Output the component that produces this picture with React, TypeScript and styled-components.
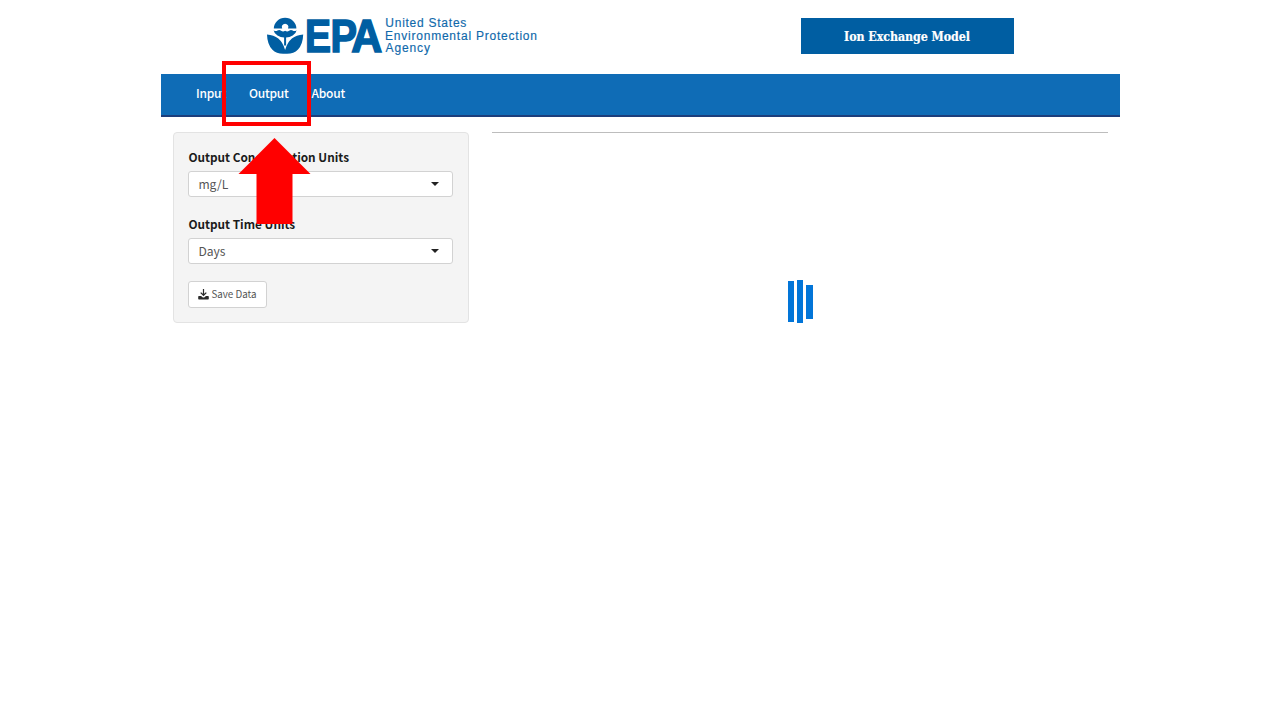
import React from "react";
import styled, { createGlobalStyle } from "styled-components";

const GlobalStyle = createGlobalStyle`
  * { box-sizing: border-box; }
  body {
    margin: 0;
    background: #fff;
    color: #1b1b1b;
    font-family: "Noto Sans CJK SC", "Open Sans", sans-serif;
    overflow: hidden;
  }
`;

const Page = styled.div`
  position: relative;
  width: 1280px;
  height: 720px;
`;

const Container = styled.div`
  width: 959px;
  margin-left: 161px;
`;

const Header = styled.header`
  display: flex;
  justify-content: space-between;
  height: 74px;
  padding: 17px 106px 0;
`;

const Logo = styled.svg`
  display: block;
  width: 280px;
  height: 42px;
`;

const AppTitle = styled.h1`
  display: flex;
  align-items: center;
  justify-content: center;
  width: 213px;
  height: 36px;
  margin: 1px 0 0;
  padding-right: 1px;
  background: #005ea2;
  color: #fff;
  font: bold 12.3px "DejaVu Serif Condensed", "DejaVu Serif", serif;
  font-stretch: condensed;
  letter-spacing: -0.04px;
  -webkit-text-stroke: 0.2px #fff;
`;

const NavBar = styled.nav`
  display: flex;
  gap: 23px;
  height: 43px;
  padding: 0 35px;
  background: #0f6cb6;
  border-bottom: 2px solid #1c3e7c;
`;

const NavLink = styled.a<{ $width: number }>`
  width: ${(p) => p.$width}px;
  color: #fff;
  font-size: 12px;
  font-weight: 500;
  letter-spacing: -0.25px;
  line-height: 38px;
  white-space: nowrap;
`;

const Content = styled.main`
  display: flex;
  align-items: flex-start;
  gap: 23px;
  padding: 15px 12px 0;
`;

const Sidebar = styled.form`
  width: 296px;
  height: 191px;
  padding: 15px 14.6px 0 14.4px;
  background: #f4f4f4;
  border: 1px solid #e3e3e3;
  border-radius: 4px;
`;

const Field = styled.div`
  height: 67px;
`;

const Label = styled.label`
  display: block;
  height: 23px;
  font-size: 11.8px;
  font-weight: 700;
  line-height: 17px;
  white-space: nowrap;
`;

const Select = styled.div`
  display: flex;
  align-items: center;
  justify-content: space-between;
  height: 26.4px;
  padding: 0 13px 1.4px 9px;
  background: #fff;
  border: 1px solid #d2d2d2;
  border-radius: 3px;
  color: #555;
  font-size: 12.1px;
  line-height: 23px;
`;

const Caret = styled.span`
  border: 4px solid transparent;
  border-top-color: #222;
  border-bottom: 0;
`;

const SaveButton = styled.button`
  display: flex;
  align-items: center;
  gap: 2px;
  width: 79px;
  height: 27px;
  margin-top: -1px;
  padding: 0 0 0 9px;
  background: #fff;
  border: 1px solid #d2d2d2;
  border-radius: 3px;
  color: #555;
  font: 9.8px/25px "Noto Sans CJK SC", sans-serif;
  white-space: nowrap;
`;

const MainPanel = styled.section`
  display: flex;
  flex-direction: column;
  align-items: center;
  width: 616px;
  border-top: 1px solid #bdbdbd;
`;

const Spinner = styled.div`
  display: flex;
  align-items: center;
  gap: 3px;
  height: 42px;
  margin-top: 147px;
  margin-left: 0.6px;
`;

const SpinnerBar = styled.span<{ $height: number; $shift: number }>`
  width: 6.2px;
  height: ${(p) => p.$height}px;
  margin-top: ${(p) => p.$shift}px;
  background: #0275d8;
`;

const Highlight = styled.div`
  position: absolute;
  left: 222px;
  top: 61px;
  width: 89px;
  height: 65px;
  border: 4px solid #f00;
`;

const Arrow = styled.svg`
  position: absolute;
  left: 238px;
  top: 138px;
`;

function EpaLogo() {
  return (
    <Logo viewBox="267 17 280 42" fill="#005ea2" fontFamily="'Liberation Sans', sans-serif">
      <path d="M273.8 28.6a11.3 10.8 0 0 1 22.6 0h-8.4a3.3 3.3 0 1 0-5.8 0z" />
      <path d="M273.6 30.2q2 1.6 3.9.4 1.8-1.2 3.6.2 1.9 1.3 4 0 2.1 1.3 4 0 1.8-1.4 3.6-.2 1.9 1.2 3.9-.4-.6 3.4-3.9 5.4-3 1.8-6.6 2v8h-2v-8q-3.6-.2-6.6-2-3.3-2-3.9-5.4z" />
      <path d="M267 34.4q6.8.4 11.3 4.2 4.8 4.1 6.8 11.4 2-7.3 6.8-11.4 4.5-3.8 11.3-4.2-.3 9.8-5.2 15-4.2 4.3-10.9 4.3h-4q-6.7 0-10.9-4.3-4.9-5.2-5.2-15z" />
      <g fontSize="47" fontWeight="700" stroke="#005ea2" strokeWidth="1.6">
        <text y="51.8">
          <tspan x="304.9" textLength="26" lengthAdjust="spacingAndGlyphs">E</tspan>
          <tspan x="330.5" textLength="26.5" lengthAdjust="spacingAndGlyphs">P</tspan>
          <tspan x="351.2" textLength="31" lengthAdjust="spacingAndGlyphs">A</tspan>
        </text>
      </g>
      <g fontSize="12" fill="#0f69ab" stroke="#0f69ab" strokeWidth="0.15">
        <text x="385.3" y="27.4" textLength="81">United States</text>
        <text x="385" y="40" textLength="152">Environmental Protection</text>
        <text x="385.5" y="52.4" textLength="44.5">Agency</text>
      </g>
    </Logo>
  );
}

function DownloadIcon() {
  return (
    <svg width="11" height="11" viewBox="0 0 11 11">
      <path d="M5.5 0v6M2.7 3.6l2.8 2.7 2.8-2.7" fill="none" stroke="#2b2b2b" strokeWidth="1.2" />
      <path d="M0.9 7h2.2l1.4 1.2q1 .7 2 0L7.9 7h2.2q.7 0 .7.7v2q0 .8-.7.8H.9q-.7 0-.7-.8v-2q0-.7.7-.7z" fill="#2b2b2b" />
    </svg>
  );
}

export default function App() {
  return (
    <Page>
      <GlobalStyle />
      <Container>
        <Header>
          <EpaLogo />
          <AppTitle>Ion Exchange Model</AppTitle>
        </Header>
        <NavBar>
          <NavLink $width={30}>Input</NavLink>
          <NavLink $width={39.6}>Output</NavLink>
          <NavLink $width={40}>About</NavLink>
        </NavBar>
        <Content>
          <Sidebar>
            <Field>
              <Label>Output Concentration Units</Label>
              <Select>mg/L<Caret /></Select>
            </Field>
            <Field>
              <Label>Output Time Units</Label>
              <Select>Days<Caret /></Select>
            </Field>
            <SaveButton type="button"><DownloadIcon />Save Data</SaveButton>
          </Sidebar>
          <MainPanel>
            <Spinner>
              <SpinnerBar $height={41} $shift={0} />
              <SpinnerBar $height={43} $shift={0} />
              <SpinnerBar $height={34} $shift={2} />
            </Spinner>
          </MainPanel>
        </Content>
      </Container>
      <Highlight />
      <Arrow width="73" height="86" viewBox="0 0 73 86">
        <path d="M36.5 0 72.5 36H54.5V86H18.5V36H.5z" fill="#f00" />
      </Arrow>
    </Page>
  );
}
